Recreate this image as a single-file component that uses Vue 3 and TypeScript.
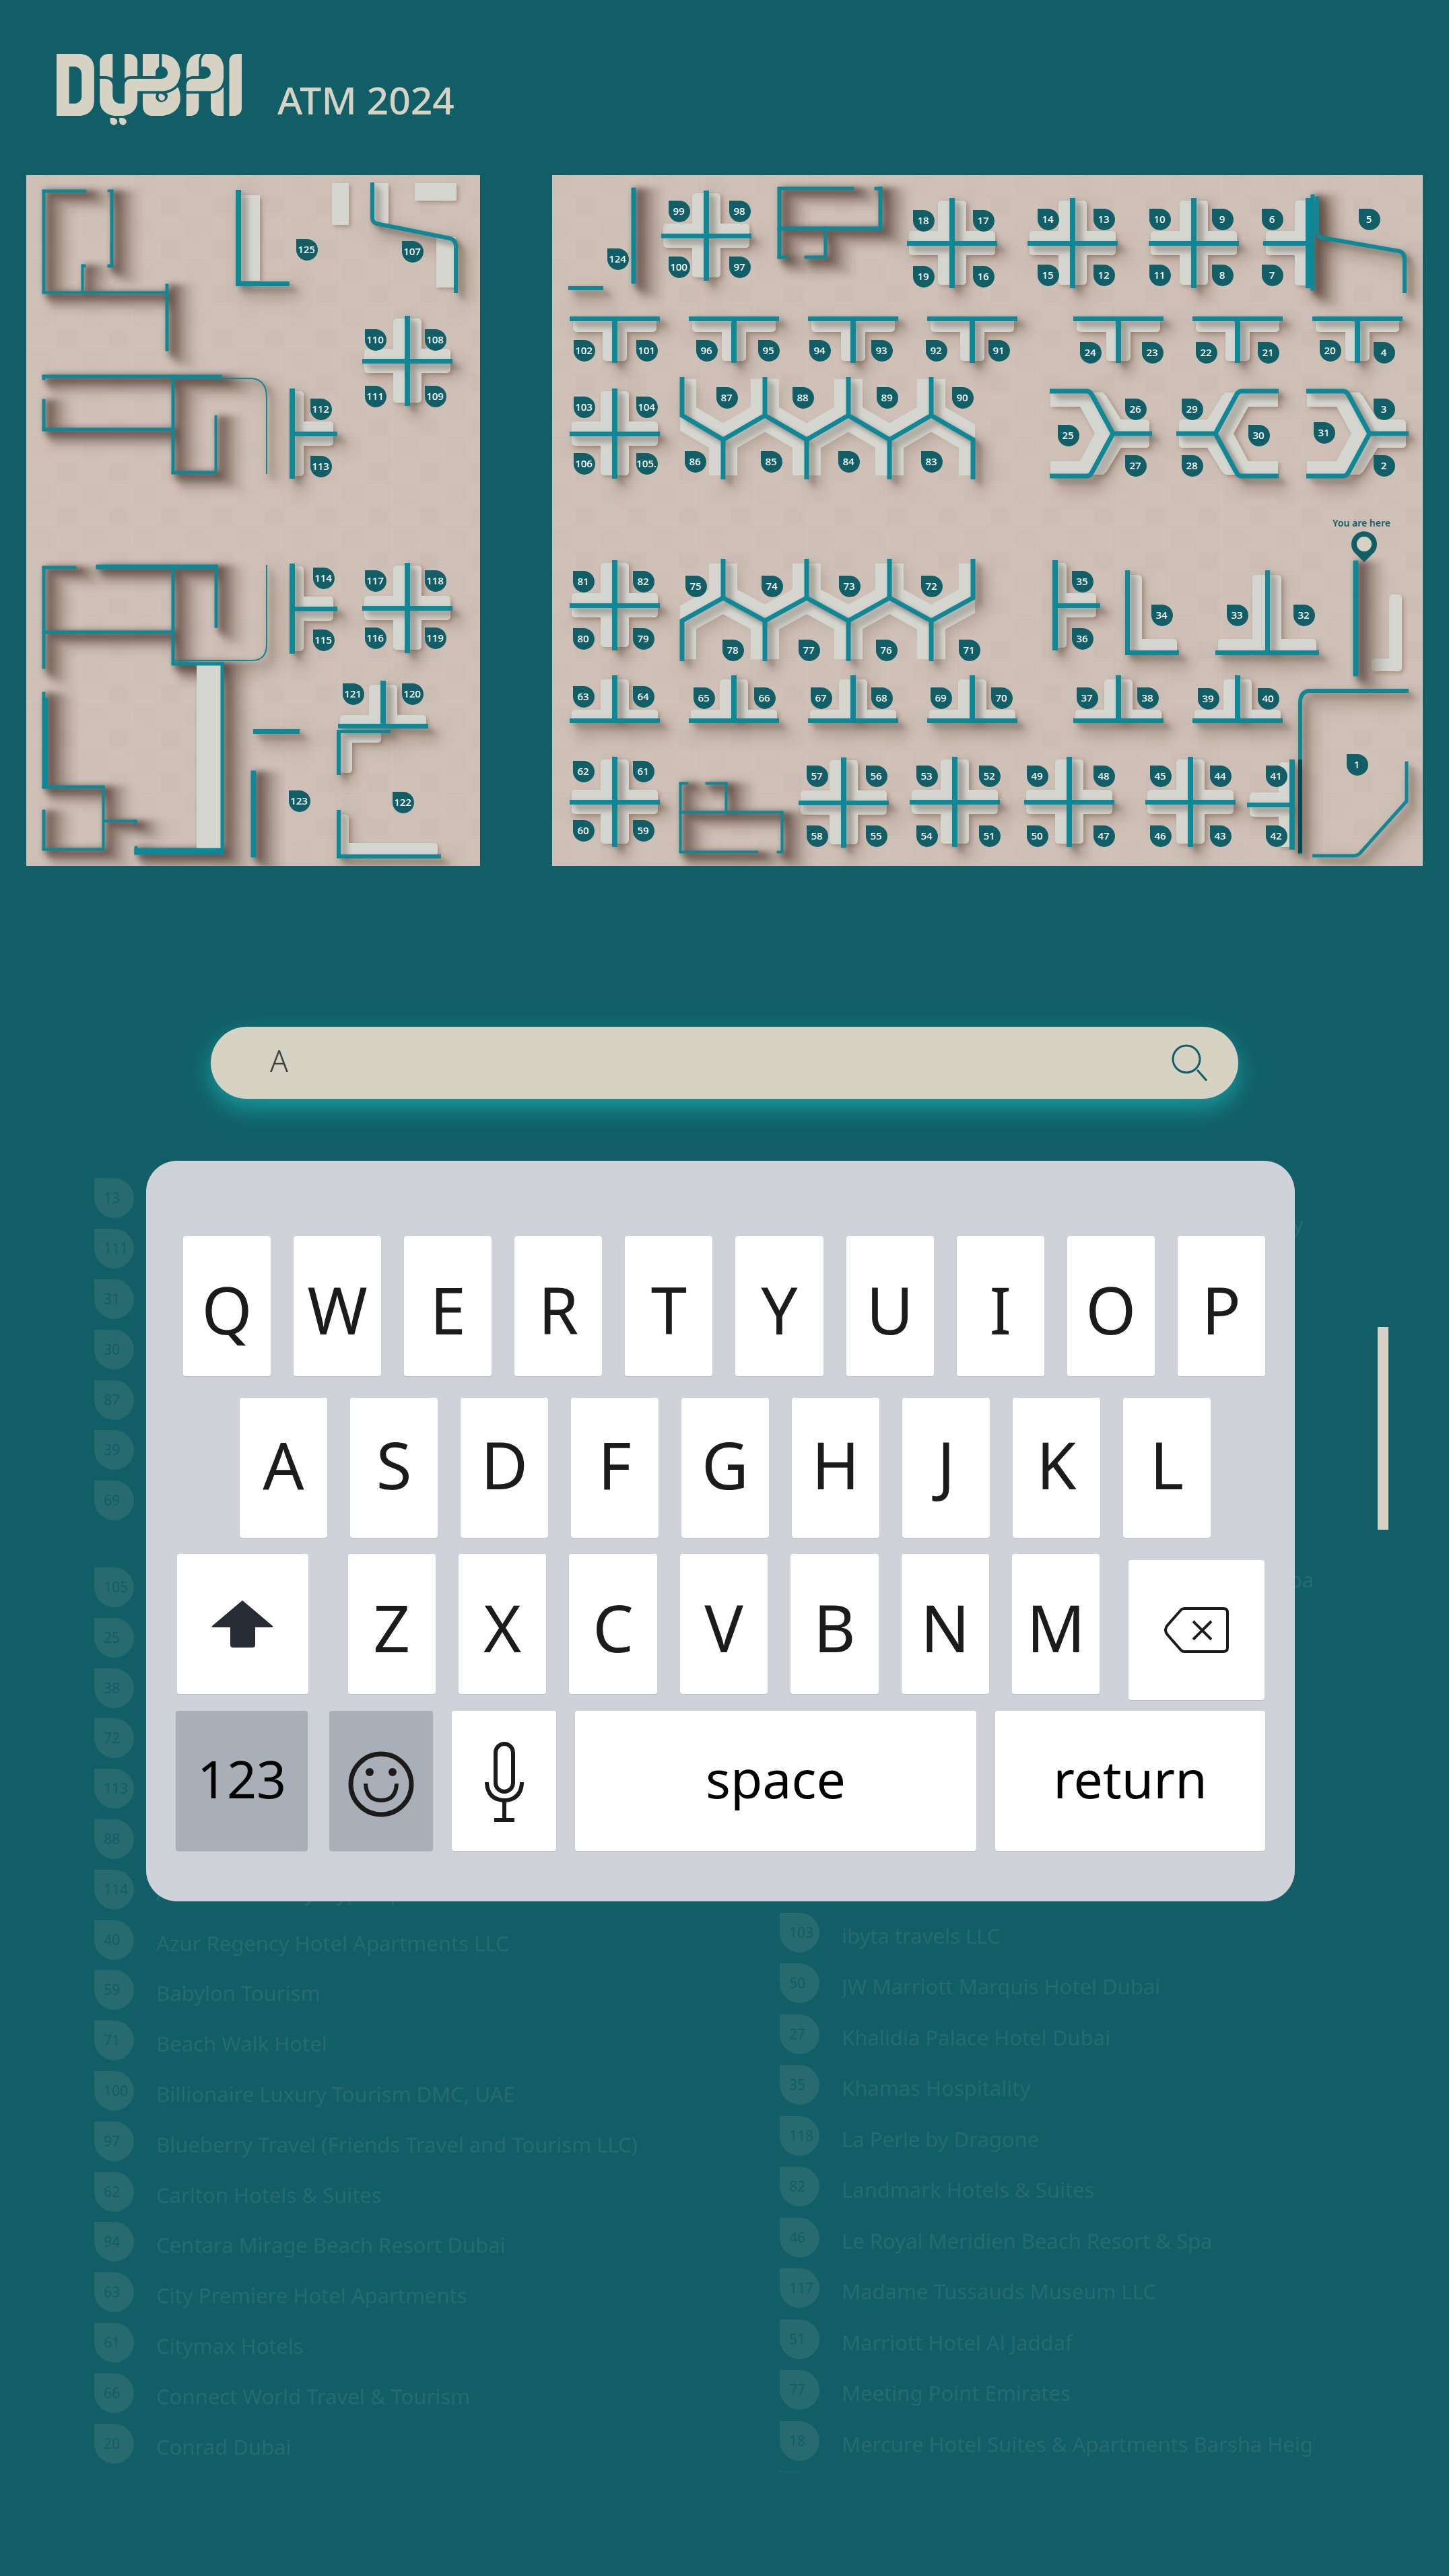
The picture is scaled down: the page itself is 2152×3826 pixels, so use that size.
<script setup lang="ts">
import { ref } from 'vue'

interface Box { x: number; y: number; w: number; h: number; r: number }
interface Pin { n: string; x: number; y: number }
interface Entry { no?: string; name?: string; tall?: boolean }
interface Hall {
  id: string
  label: string
  view: string
  floor: [number, number, number, number]
  booths: string
  rooms: string
  lines: { d: string; w: number }[]
  counters: Box[]
  blocks: string[]
  pins: Pin[]
}

const bar = (x1: number, y1: number, x2: number, y2: number): string =>
  `M${x1} ${y1}H${x2}V${y2}H${x1}Z`
const bars = (list: number[][]): string => list.map((b) => bar(b[0], b[1], b[2], b[3])).join('')
const box = (x1: number, y1: number, x2: number, y2: number, r = 5): Box => ({
  x: x1, y: y1, w: x2 - x1, h: y2 - y1, r,
})
const pins = (list: [string | number, number, number][]): Pin[] =>
  list.map(([n, x, y]) => ({ n: String(n), x, y }))

// Booth shapes, each placed by the point where its two walls meet.
const crossWalls = (x: number, y: number): string =>
  bar(x - 67, y - 3, x + 67, y + 4) + bar(x - 4, y - 67, x + 4, y + 67)
const crossTops = (x: number, y: number): Box[] => [
  box(x - 64, y - 18, x + 64, y + 18), box(x - 21, y - 63, x + 21, y + 62),
]
const teeDownWalls = (x: number, y: number): string =>
  bar(x - 67, y - 3, x + 67, y + 4) + bar(x - 4, y, x + 4, y + 66)
const teeDownTops = (x: number, y: number): Box[] => [
  box(x - 62, y, x + 62, y + 20), box(x - 18, y, x + 18, y + 63),
]
const teeUpWalls = (x: number, y: number): string =>
  bar(x - 67, y - 3, x + 67, y + 4) + bar(x - 4, y - 67, x + 4, y)
const teeUpTops = (x: number, y: number): Box[] => [
  box(x - 64, y - 16, x + 64, y), box(x - 21, y - 61, x + 21, y),
]
const sideWalls = (x: number, y: number, dir: 1 | -1): string =>
  bar(x - 4, y - 67, x + 4, y + 67) +
  (dir === 1 ? bar(x, y - 3, x + 67, y + 4) : bar(x - 67, y - 3, x, y + 4))
const sideTops = (x: number, y: number, dir: 1 | -1): Box[] =>
  dir === 1
    ? [box(x, y - 18, x + 61, y + 18), box(x, y - 63, x + 17, y + 63)]
    : [box(x - 63, y - 18, x, y + 18), box(x - 20, y - 63, x, y + 63)]

type P = [number, number]
const westCross: P[] = [[605, 536], [605, 903]]
const eastCross: P[] = [
  [1049, 350], [1414, 361], [1593, 361], [1773, 361], [913, 644], [913, 899],
  [913, 1191], [1253, 1192], [1418, 1191], [1588, 1191], [1768, 1191],
]
const eastDown: P[] = [[913, 473], [1090, 473], [1267, 473], [1444, 473], [1661, 473], [1838, 473], [2016, 473]]
const eastUp: P[] = [[913, 1070], [1090, 1070], [1267, 1070], [1444, 1070], [1661, 1070], [1838, 1070]]

const topStems = [1013, 1136, 1260, 1383]
const lowStems = [1074, 1198, 1321, 1445]
const zigzag = (y0: number, y1: number, y2: number, y3: number): string =>
  topStems
    .map((x, i) => {
      const low = lowStems[i]
      const next = topStems[i + 1]
      const back = next ? `M${low} ${y2}L${next} ${y1}` : ''
      return `M${x} ${y0}V${y1}L${low} ${y2}V${y3}${back}`
    })
    .join('')
const upperZig = zigzag(560, 617, 653, 712)
const lowerZig = zigzag(982, 922, 888, 830)

const hexWall = (f: (x: number) => number): string =>
  `M${f(1559)} 581H${f(1614)}Q${f(1619)} 581 ${f(1622)} 587L${f(1653)} 644L${f(1622)} 701Q${f(1619)} 707 ${f(1614)} 707H${f(1559)}M${f(1651)} 644H${f(1711)}`
const hexTop = (f: (x: number) => number): string =>
  'M' +
  ([
    [1560, 583], [1638, 583], [1643, 588], [1665, 623], [1704, 623], [1707, 627], [1707, 662],
    [1704, 665], [1665, 665], [1643, 701], [1638, 705], [1560, 705], [1560, 685], [1604, 685],
    [1626, 644], [1604, 604], [1560, 604],
  ] as P[]).map(([x, y]) => `${f(x)} ${y}`).join('L') + 'Z'
const same = (x: number): number => x
const shifted = (x: number): number => x + 381
const mirrored = (x: number): number => 3458 - x

// Layers of the shadow that a wall throws down and to the right.
const tallSteps = [
  { d: 5, o: 0.42 }, { d: 9, o: 0.3 }, { d: 14, o: 0.22 }, { d: 20, o: 0.16 }, { d: 27, o: 0.1 },
]
const lowSteps = [3, 6, 9, 12]

const halls: Hall[] = [
  {
    id: 'west',
    label: 'Stands 107 to 125',
    view: '39 260 674 1026',
    floor: [39, 260, 674, 1026],
    booths:
      westCross.map(([x, y]) => crossWalls(x, y)).join('') +
      sideWalls(434, 644, 1) + sideWalls(434, 904, 1) + teeUpWalls(569, 1078) +
      bars([
        [350, 282, 358, 425], [350, 418, 430, 425], [376, 1083, 445, 1090],
        [500, 1084, 506, 1151], [500, 1084, 580, 1089], [500, 1203, 506, 1275], [500, 1269, 655, 1275],
      ]),
    rooms: bars([
      [63, 282, 128, 286], [63, 282, 67, 436], [63, 433, 250, 436], [121, 393, 124, 433], [121, 393, 127, 397],
      [164, 282, 168, 397], [160, 282, 168, 285], [160, 393, 168, 397], [246, 422, 250, 521],
      [63, 557, 329, 561], [63, 557, 67, 564], [63, 593, 67, 640], [63, 636, 255, 640],
      [255, 557, 259, 704], [255, 700, 322, 704], [319, 617, 322, 704],
      [63, 841, 113, 845], [63, 841, 67, 993], [143, 839, 323, 845], [319, 839, 323, 932],
      [63, 937, 255, 941], [255, 843, 259, 987], [255, 984, 332, 988], [328, 984, 332, 1269],
      [200, 1260, 332, 1269], [200, 1257, 204, 1269],
      [63, 1028, 67, 1040], [63, 1037, 71, 1171], [63, 1167, 155, 1171], [152, 1167, 155, 1263],
      [63, 1260, 155, 1263], [63, 1203, 67, 1263], [155, 1218, 203, 1221], [199, 1218, 203, 1224],
      [373, 1145, 380, 1273],
    ]),
    lines: [
      { d: 'M259 562H374Q396 564 396 590V704', w: 2 },
      { d: 'M396 839V957Q396 981 374 981H259', w: 2 },
      { d: 'M553 271V324Q553 330 559 332L668 354Q677 356 677 366V435', w: 6 },
    ],
    counters: [
      ...westCross.flatMap(([x, y]) => crossTops(x, y)),
      ...sideTops(434, 644, 1), ...sideTops(434, 904, 1), ...teeUpTops(569, 1078),
      box(358, 290, 386, 417, 0), box(493, 272, 518, 334, 0), box(553, 272, 577, 332, 0),
      box(616, 272, 678, 298, 0), box(648, 352, 677, 427, 0), box(292, 986, 330, 1262, 0),
      box(504, 1087, 566, 1103), box(504, 1087, 523, 1148), box(504, 1210, 518, 1271), box(504, 1252, 650, 1271),
    ],
    blocks: [],
    pins: pins([
      [125, 440, 355], [107, 597, 358], [110, 542, 489], [108, 631, 489], [111, 542, 573], [109, 631, 573],
      [112, 461, 592], [113, 461, 677], [114, 465, 843], [115, 465, 935], [117, 542, 847], [118, 631, 847],
      [116, 542, 932], [119, 631, 932], [121, 509, 1015], [120, 597, 1015], [123, 429, 1174], [122, 583, 1176],
    ]),
  },
  {
    id: 'east',
    label: 'Stands 1 to 106 and 124',
    view: '820 260 1293 1026',
    floor: [820, 260, 1293, 1026],
    booths:
      eastCross.map(([x, y]) => crossWalls(x, y)).join('') +
      eastDown.map(([x, y]) => teeDownWalls(x, y)).join('') +
      eastUp.map(([x, y]) => teeUpWalls(x, y)).join('') +
      sideWalls(1567, 899, 1) + sideWalls(1943, 361, -1) + sideWalls(1919, 1195, -1) +
      bars([
        [844, 425, 896, 431], [1671, 847, 1678, 973], [1671, 966, 1751, 973],
        [1805, 966, 1959, 973], [1879, 847, 1886, 970],
      ]),
    rooms: bars([
      [938, 279, 944, 421], [1947, 289, 1952, 431], [2010, 833, 2017, 1004],
      [1155, 278, 1160, 384], [1155, 278, 1268, 282], [1305, 278, 1310, 342], [1299, 278, 1310, 282],
      [1155, 337, 1310, 342], [1224, 337, 1228, 384], [1155, 380, 1170, 384], [1195, 380, 1228, 384],
      [1009, 1162, 1012, 1267], [1009, 1162, 1022, 1165], [1048, 1162, 1080, 1165], [1077, 1162, 1080, 1208],
      [1009, 1205, 1163, 1208], [1160, 1205, 1163, 1267], [1009, 1264, 1126, 1267], [1154, 1264, 1163, 1267],
    ]),
    lines: [
      { d: upperZig, w: 7 },
      { d: lowerZig, w: 7 },
      { d: hexWall(same), w: 7 },
      { d: hexWall(shifted), w: 7 },
      { d: hexWall(mirrored), w: 7 },
      { d: 'M1956 292V342Q1956 351 1963 353L2078 373Q2086 375 2086 386V435', w: 6 },
      { d: 'M2092 1026H1945Q1931 1027 1931 1044V1269', w: 6 },
      { d: 'M2089 1131V1190L2020 1267Q2016 1271 2010 1271H1949', w: 5 },
    ],
    counters: [
      ...eastCross.flatMap(([x, y]) => crossTops(x, y)),
      ...eastDown.flatMap(([x, y]) => teeDownTops(x, y)),
      ...eastUp.flatMap(([x, y]) => teeUpTops(x, y)),
      ...sideTops(1567, 899, 1), ...sideTops(1943, 361, -1), ...sideTops(1919, 1195, -1),
      box(1675, 854, 1696, 970), box(1675, 949, 1748, 970), box(1860, 854, 1903, 970), box(1809, 949, 1955, 970),
      box(2063, 883, 2082, 997), box(2037, 978, 2082, 997),
    ],
    blocks: [hexTop(same), hexTop(shifted), hexTop(mirrored)],
    pins: pins([
      [124, 902, 369], [99, 993, 298], [98, 1083, 298], [100, 993, 381], [97, 1083, 381],
      [18, 1356, 312], [17, 1445, 312], [19, 1356, 395], [16, 1445, 395],
      [102, 852, 505], [101, 945, 505], [96, 1034, 505], [95, 1126, 505], [94, 1202, 505], [93, 1294, 505],
      [92, 1375, 505], [91, 1468, 505], [103, 852, 589], [104, 945, 589], [106, 852, 673], ['105.', 945, 673],
      [87, 1064, 575], [88, 1177, 575], [89, 1302, 575], [90, 1414, 575],
      [86, 1017, 670], [85, 1130, 670], [84, 1245, 670], [83, 1368, 670],
      [14, 1541, 310], [13, 1624, 310], [15, 1541, 393], [12, 1624, 393],
      [10, 1707, 310], [9, 1800, 310], [11, 1707, 393], [8, 1800, 393],
      [6, 1874, 310], [7, 1874, 393], [5, 2018, 310],
      [24, 1604, 508], [23, 1696, 508], [22, 1776, 508], [21, 1868, 508], [20, 1960, 505], [4, 2040, 508],
      [26, 1671, 592], [29, 1755, 592], [3, 2040, 592], [25, 1571, 631], [30, 1854, 631], [31, 1951, 627],
      [27, 1671, 676], [28, 1755, 676], [2, 2040, 676],
      [81, 851, 848], [82, 940, 848], [80, 851, 933], [79, 940, 933],
      [75, 1018, 855], [74, 1131, 855], [73, 1246, 855], [72, 1368, 855],
      [78, 1073, 950], [77, 1186, 950], [76, 1301, 950], [71, 1424, 950],
      [63, 851, 1019], [64, 940, 1019], [65, 1030, 1021], [66, 1120, 1021], [67, 1204, 1021], [68, 1294, 1021],
      [69, 1382, 1021], [70, 1472, 1021], [62, 851, 1130], [61, 940, 1130], [60, 851, 1218], [59, 940, 1218],
      [57, 1198, 1137], [56, 1286, 1137], [58, 1198, 1226], [55, 1286, 1226],
      [53, 1361, 1137], [52, 1454, 1137], [54, 1361, 1226], [51, 1454, 1226],
      [35, 1592, 848], [36, 1592, 933], [34, 1710, 898], [33, 1822, 898], [32, 1921, 898],
      [37, 1599, 1021], [38, 1689, 1021], [39, 1779, 1022], [40, 1868, 1022],
      [49, 1525, 1137], [48, 1624, 1137], [50, 1525, 1226], [47, 1624, 1226],
      [45, 1708, 1137], [44, 1797, 1137], [46, 1708, 1226], [43, 1797, 1226],
      [41, 1880, 1137], [42, 1880, 1226], [1, 2000, 1120],
    ]),
  },
]

const leftEntries: Entry[] = [
  { no: '13' }, { no: '111' }, { no: '31' }, { no: '30' }, { no: '87' }, { no: '39' },
  { no: '69', tall: true },
  { no: '105' }, { no: '25' }, { no: '38' }, { no: '72' }, { no: '113' }, { no: '88' },
  { no: '114', name: 'Arabian Century Hyperspace' },
  { no: '40', name: 'Azur Regency Hotel Apartments LLC' },
  { no: '59', name: 'Babylon Tourism' },
  { no: '71', name: 'Beach Walk Hotel' },
  { no: '100', name: 'Billionaire Luxury Tourism DMC, UAE' },
  { no: '97', name: 'Blueberry Travel (Friends Travel and Tourism LLC)' },
  { no: '62', name: 'Carlton Hotels & Suites' },
  { no: '94', name: 'Centara Mirage Beach Resort Dubai' },
  { no: '63', name: 'City Premiere Hotel Apartments' },
  { no: '61', name: 'Citymax Hotels' },
  { no: '66', name: 'Connect World Travel & Tourism' },
  { no: '20', name: 'Conrad Dubai' },
]

const rightEntries: Entry[] = [
  { name: 'Grand Hyatt Dubai Conference Hotel LLC & City' },
  {}, {}, {}, {}, {}, {},
  { name: 'Grand Millennium Business Bay Hotel LLC, Dubai' },
  {}, {}, {}, {}, {}, {},
  { no: '103', name: 'ibyta travels LLC' },
  { no: '50', name: 'JW Marriott Marquis Hotel Dubai' },
  { no: '27', name: 'Khalidia Palace Hotel Dubai' },
  { no: '35', name: 'Khamas Hospitality' },
  { no: '118', name: 'La Perle by Dragone' },
  { no: '82', name: 'Landmark Hotels & Suites' },
  { no: '46', name: 'Le Royal Meridien Beach Resort & Spa' },
  { no: '117', name: 'Madame Tussauds Museum LLC' },
  { no: '51', name: 'Marriott Hotel Al Jaddaf' },
  { no: '77', name: 'Meeting Point Emirates' },
  { no: '18', name: 'Mercure Hotel Suites & Apartments Barsha Heights' },
  {},
]

const query = ref('A')
const type = (key: string): void => { query.value += key }
const erase = (): void => { query.value = query.value.slice(0, -1) }
</script>

<template>
  <main class="kiosk">
    <header class="top">
      <svg class="logo" viewBox="0 0 275 106" role="img" aria-label="Dubai">
        <g transform="scale(0.4655 0.3333)" fill="#d7d3c4">
          <path fill-rule="evenodd" d="M0 0H78Q118 8 120 65V212Q118 266 78 276H0ZM40 56V221H62Q79 214 80 192V88Q79 62 60 56Z" />
          <path d="M179 0H163Q140 5 138 32V99H155Q170 99 179 110Z" />
          <path d="M217 0H233Q256 5 258 32V99H238Q225 99 217 110Z" />
          <path d="M138 111H157Q176 114 179 140V188Q181 216 198 221H217V140Q219 114 236 111H335Q355 107 355 83Q353 60 336 56V0Q390 8 395 82Q392 158 342 166H258V212Q255 266 213 276H184Q141 266 138 212Z" />
          <path d="M275 0H327V58Q317 65 316 82V99H275Z" />
          <path d="M275 177H319Q315 187 317 198Q321 215 336 215Q353 211 355 190Q355 180 350 176Q373 168 387 148Q395 168 395 202Q392 264 340 276H300Q276 270 275 232Z" />
          <path d="M329 177Q345 180 346 194Q344 208 336 209Q325 205 325 189Q326 180 329 177Z" />
          <path d="M462 0Q455 12 454 30V99H437Q422 100 414 111V70Q418 8 450 0Z" />
          <path d="M462 56V28Q464 8 475 0H500Q530 10 533 60V105Q531 158 498 166H414V138Q417 114 432 111H470Q492 107 492 83Q490 60 474 56Z" />
          <path d="M414 177H454V238Q453 270 433 276H414Z" />
          <path d="M533 148V276H514Q494 270 492 240V177Q520 176 533 148Z" />
          <path d="M591 0V245Q588 272 570 276H551V30Q553 3 572 0Z" />
          <path d="M171 285H182Q194 290 194 303Q192 316 182 318Q171 314 171 300Z" />
          <path d="M200 285H211Q223 290 223 303Q221 316 211 318Q200 314 200 300Z" />
        </g>
      </svg>
      <h1>ATM 2024</h1>
    </header>

    <section class="halls" aria-label="Hall plan">
      <svg v-for="hall in halls" :key="hall.id" :class="['hall', hall.id]" :viewBox="hall.view" role="img" :aria-label="hall.label">
        <defs>
          <pattern :id="hall.id + '-tiles'" x="45" y="259" width="77" height="66" patternUnits="userSpaceOnUse">
            <rect width="77" height="66" fill="#cfc1b8" />
            <rect x="2" y="2" width="28" height="24" fill="#cdbfb6" />
            <rect x="40" y="35" width="28" height="24" fill="#cdbeb5" />
            <path d="M0 7L7 0H25L32 7V21L25 28H7L0 21ZM36 0V28M70 0V66M36 33H70M0 62H77M0 33H77" fill="none" stroke="#c5b6ac" stroke-opacity=".3" />
          </pattern>
          <filter :id="hall.id + '-near'" x="-5%" y="-5%" width="110%" height="110%"><feGaussianBlur stdDeviation="3" /></filter>
          <filter :id="hall.id + '-far'" x="-5%" y="-5%" width="110%" height="110%"><feGaussianBlur stdDeviation="11" /></filter>
          <filter :id="hall.id + '-deep'" x="-5%" y="-5%" width="110%" height="110%"><feGaussianBlur stdDeviation="5" /></filter>
          <clipPath :id="hall.id + '-zig'">
            <rect x="1010" y="563" width="438" height="143" />
            <rect x="1010" y="837" width="438" height="142" />
          </clipPath>
        </defs>
        <rect :x="hall.floor[0]" :y="hall.floor[1]" :width="hall.floor[2]" :height="hall.floor[3]" :fill="`url(#${hall.id}-tiles)`" />

        <g fill="none" stroke="#75584b" :filter="`url(#${hall.id}-far)`">
          <g opacity=".4" transform="translate(13 14)">
            <path :d="hall.booths" fill="#75584b" stroke-width="9" />
            <path v-for="l in hall.lines" :key="l.d" :d="l.d" :stroke-width="l.w + 9" />
          </g>
        </g>
        <g fill="#8a6a5c" opacity=".55" transform="translate(3 3)" :filter="`url(#${hall.id}-near)`">
          <rect v-for="(c, i) in hall.counters" :key="i" :x="c.x" :y="c.y" :width="c.w" :height="c.h" :rx="c.r" />
          <path v-for="d in hall.blocks" :key="d" :d="d" />
        </g>
        <g fill="#d6d6d0">
          <rect v-for="(c, i) in hall.counters" :key="i" :x="c.x" :y="c.y" :width="c.w" :height="c.h" :rx="c.r" />
          <path v-for="d in hall.blocks" :key="d" :d="d" />
        </g>
        <g v-if="hall.id === 'east'" :clip-path="`url(#${hall.id}-zig)`" fill="none" stroke="#d6d6d0" stroke-width="42">
          <path :d="upperZig" />
          <path :d="lowerZig" />
        </g>

        <g :filter="`url(#${hall.id}-near)`" fill="none" stroke="#5e5448">
          <g v-for="s in lowSteps" :key="s" opacity=".17" :transform="`translate(${s} ${s - 1})`">
            <path :d="hall.booths" fill="#5e5448" stroke-width="1" />
            <path v-for="l in hall.lines" :key="l.d" :d="l.d" :stroke-width="l.w + 1" />
          </g>
        </g>
        <g :filter="`url(#${hall.id}-deep)`">
          <g v-for="s in tallSteps" :key="s.d" :opacity="s.o" :transform="`translate(${s.d} ${Math.round(s.d / 2)})`">
            <path :d="hall.rooms" fill="#4b362c" stroke="#4b362c" :stroke-width="s.d" />
          </g>
        </g>
        <rect v-if="hall.id === 'west'" x="292" y="988" width="37" height="273" fill="#d6d6d0" />

        <g fill="none" stroke="#0e8796">
          <path :d="hall.rooms" fill="#0e8796" stroke-width="1" />
          <path v-for="l in hall.lines" :key="l.d" :d="l.d" :stroke-width="l.w" />
          <path :d="hall.booths" fill="#0e8796" stroke="none" />
        </g>

        <template v-if="hall.id === 'east'">
          <rect x="1928" y="1128" width="6" height="139" fill="#02424b" opacity=".9" />
          <text class="here" x="2022" y="782" text-anchor="middle">You are here</text>
          <path d="M2026 835L2011 820A19 19 0 1 1 2041 820Z" fill="#115e66" />
          <circle cx="2026" cy="808" r="11" fill="#d7d3c4" />
        </template>

        <g v-for="p in hall.pins" :key="p.n" :transform="`translate(${p.x} ${p.y})`">
          <path d="M0 0H15A16 16 0 1 1 0 15Z" fill="#115e66" />
          <text class="pin" x="15" y="21" text-anchor="middle">{{ p.n }}</text>
        </g>
      </svg>
    </section>

    <form class="search" role="search" @submit.prevent>
      <label class="hidden" for="exhibitor">Search exhibitors</label>
      <input id="exhibitor" v-model="query" type="text" autocomplete="off" />
      <button type="submit" aria-label="Search">
        <svg width="56" height="56" viewBox="0 0 56 56" fill="none" stroke="#115e66">
          <circle cx="25" cy="22" r="20" stroke-width="3" />
          <path d="M41 38L55 54" stroke-width="3" />
        </svg>
      </button>
    </form>

    <section class="directory" aria-label="Exhibitors">
      <div class="lists">
        <ul class="left">
          <li v-for="(e, i) in leftEntries" :key="i" :class="{ tall: e.tall }">
            <span class="badge">{{ e.no }}</span><span class="name">{{ e.name }}</span>
          </li>
        </ul>
        <ul class="right">
          <li v-for="(e, i) in rightEntries" :key="i">
            <span class="badge">{{ e.no }}</span><span class="name">{{ e.name }}</span>
          </li>
        </ul>
      </div>
      <div class="thumb"></div>

      <div class="keyboard">
        <div class="row first">
          <button v-for="k in 'QWERTYUIOP'" :key="k" type="button" @click="type(k)">{{ k }}</button>
        </div>
        <div class="row second">
          <button v-for="k in 'ASDFGHJKL'" :key="k" type="button" @click="type(k)">{{ k }}</button>
        </div>
        <div class="row third">
          <button class="shift" type="button" aria-label="Shift">
            <svg width="92" height="70" viewBox="0 0 92 70" fill="#272b33">
              <path d="M46 0L91 38Q92 40 89 40H65V66Q65 70 61 70H32Q28 70 28 66V40H3Q0 40 1 38Z" />
            </svg>
          </button>
          <div class="letters">
            <button v-for="k in 'ZXCVBNM'" :key="k" type="button" @click="type(k)">{{ k }}</button>
          </div>
          <button class="delete" type="button" aria-label="Delete" @click="erase">
            <svg width="96" height="68" viewBox="0 0 96 68" fill="none" stroke="#1d1b1a" stroke-width="4">
              <path d="M30 2H88Q94 2 94 8V60Q94 66 88 66H30Q27 66 25 64L4 40Q0 34 4 28L25 4Q27 2 30 2Z" />
              <path d="M43 21L70 48M70 21L43 48" />
            </svg>
          </button>
        </div>
        <div class="row fourth">
          <button class="numbers" type="button">123</button>
          <button class="emoji" type="button" aria-label="Emoji">
            <svg width="100" height="100" viewBox="0 0 100 100" fill="none" stroke="#1d1b1a">
              <circle cx="50" cy="50" r="45" stroke-width="7" />
              <path d="M27 49Q28 74 50 74Q72 74 73 49" stroke-width="6" />
              <circle cx="33" cy="32" r="6" fill="#1d1b1a" stroke="none" />
              <circle cx="67" cy="32" r="6" fill="#1d1b1a" stroke="none" />
            </svg>
          </button>
          <button class="mic" type="button" aria-label="Dictate">
            <svg width="60" height="120" viewBox="0 0 60 120" fill="none" stroke="#1d1b1a" stroke-width="6">
              <rect x="17" y="3" width="26" height="71" rx="13" />
              <path d="M4 60V62Q6 86 30 87Q54 86 56 62V60M30 87V114M15 116H45" />
            </svg>
          </button>
          <button class="space" type="button" @click="type(' ')">space</button>
          <button class="return" type="button">return</button>
        </div>
      </div>
    </section>
  </main>
</template>

<style>
body {
  margin: 0;
  background: #115e66;
}
</style>

<style scoped>
.kiosk {
  padding-bottom: 154px;
  background: #115e66;
  font-family: "Noto Sans", "Open Sans", sans-serif;
  overflow: hidden;
}
.top {
  display: flex;
  align-items: flex-start;
  gap: 53px;
  box-sizing: border-box;
  height: 260px;
  padding: 80px 84px 0;
}
.logo {
  width: 275px;
  height: 106px;
}
h1 {
  margin: 28px 0 0;
  color: #d7d3c4;
  font-size: 57px;
  font-weight: 500;
  line-height: 80px;
}
.halls {
  display: flex;
  gap: 107px;
  padding: 0 39px;
}
.hall {
  display: block;
  min-width: 0;
  height: auto;
}
.west {
  flex: 674 1 0;
}
.east {
  flex: 1293 1 0;
}
.pin {
  fill: #fff;
  font-size: 15px;
  font-weight: 500;
}
.here {
  fill: #115e66;
  font-size: 14px;
  font-weight: 600;
}
.search {
  display: flex;
  align-items: center;
  box-sizing: border-box;
  max-width: 1526px;
  height: 107px;
  margin: 239px auto 0;
  padding: 0 46px 0 88px;
  border-radius: 54px;
  background: #d7d3c4;
  box-shadow: 0 14px 36px #1a9a9f;
}
.search input {
  flex: 1;
  min-width: 0;
  padding: 0 0 8px;
  border: 0;
  outline: 0;
  background: none;
  color: #3f3d3a;
  font: 300 44px "Noto Sans", sans-serif;
}
.search button {
  height: 68px;
  padding: 0;
  border: 0;
  background: none;
}
.search svg {
  display: block;
}
.hidden {
  position: absolute;
  width: 1px;
  height: 1px;
  overflow: hidden;
  clip-path: inset(50%);
}
.directory {
  position: relative;
  margin-top: 118px;
}
.lists {
  display: grid;
  grid-template-columns: 1018fr 795fr;
  max-height: 1922px;
  padding: 0 199px 0 140px;
  overflow: hidden;
}
ul {
  min-width: 0;
  margin: 0;
  padding: 0;
  list-style: none;
}
.right {
  padding-top: 34px;
}
li {
  display: flex;
  align-items: flex-start;
  gap: 33px;
  height: 75px;
}
.left li:nth-child(5n) {
  height: 74px;
}
.right li:nth-child(even) {
  height: 76px;
}
.left li.tall {
  height: 129px;
}
.badge {
  flex: none;
  box-sizing: border-box;
  width: 59px;
  height: 59px;
  padding-left: 14px;
  border-radius: 0 50% 50% 50%;
  background: #276a70;
  color: #115e66;
  font-size: 21px;
  line-height: 58px;
}
.name {
  min-width: 0;
  overflow: hidden;
  color: #276a70;
  font-size: 31px;
  line-height: 68px;
  white-space: nowrap;
}
.thumb {
  position: absolute;
  top: 221px;
  right: 90px;
  width: 16px;
  height: 301px;
  background: #d7d3c4;
}
.keyboard {
  position: absolute;
  top: -26px;
  right: 229px;
  left: 217px;
  padding: 112px 0 75px;
  border-radius: 46px;
  background: #cfd2d8;
}
.row,
.letters {
  display: flex;
  align-items: flex-start;
  gap: 34px;
}
.keyboard button {
  display: flex;
  flex: 1 1 0;
  align-items: center;
  justify-content: center;
  box-sizing: border-box;
  min-width: 0;
  height: 208px;
  padding: 0;
  border: 0;
  border-radius: 4px;
  background: #fff;
  box-shadow: 0 1px 1px #b9bcc2;
  color: #1d1b1a;
  font: 400 96px "Noto Sans", sans-serif;
}
.first {
  padding: 0 44px 0 55px;
}
.second {
  padding: 32px 125px 0 139px;
}
.third {
  gap: 0;
  padding: 24px 45px 0 46px;
}
.fourth {
  gap: 28px;
  padding: 16px 44px 0;
}
.keyboard .first button,
.keyboard .letters button {
  padding-top: 8px;
}
.keyboard .second button {
  padding-bottom: 12px;
}
.letters {
  flex: 1114 1 0;
  margin: 0 43px 0 59px;
}
.keyboard .shift {
  flex: 194 1 0;
}
.keyboard .delete {
  flex: 201 1 0;
  margin-top: 9px;
}
.keyboard .fourth button {
  padding-bottom: 8px;
  color: #000;
  font-size: 77px;
}
.keyboard .fourth .numbers {
  flex: 196 1 0;
  margin-right: 4px;
  background: #a8afb9;
}
.keyboard .fourth .emoji {
  flex: 154 1 0;
  padding: 10px 0 0;
  background: #a8afb9;
}
.keyboard .fourth .mic {
  flex: 155 1 0;
  padding: 4px 0 0;
}
.keyboard .fourth .space {
  flex: 596 1 0;
}
.keyboard .fourth .return {
  flex: 401 1 0;
}
</style>
